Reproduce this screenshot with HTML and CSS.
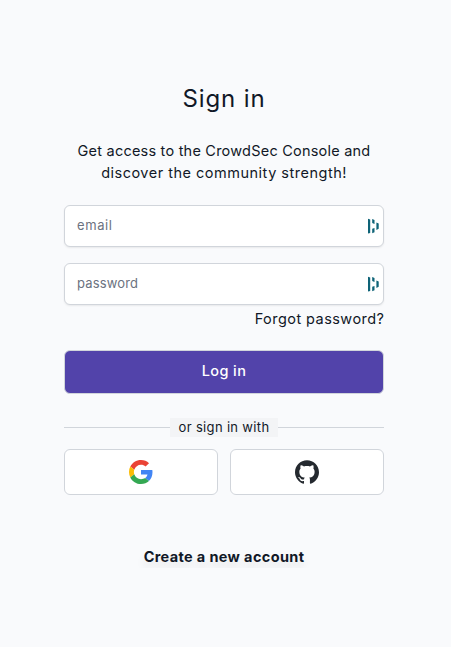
FILE: index.html
```html
<!DOCTYPE html>
<html lang="en">
<head>
<meta charset="utf-8">
<title>Sign in</title>
<link rel="stylesheet" href="styles.css">
</head>
<body>
<svg class="defs" aria-hidden="true"><symbol id="vault" viewBox="0 0 12 16"><path d="M0 .8 2.2 1.4V15L0 15.6ZM4.2 1l2.3 .9V6L4.2 5ZM4.2 10.8l2.3-.9v4.3l-2.3 1.1ZM8.4 4.4l2.3 1.1v5.2l-2.3 1.2Z"/></symbol></svg>
<main class="login">
  <h1 class="title">Sign in</h1>
  <p class="intro"><span class="line-one">Get access to the CrowdSec Console and</span><br><span class="line-two">discover the community strength!</span></p>
  <form class="form">
    <label class="field"><input class="input email" type="email" placeholder="email"><svg class="vault"><use href="#vault"/></svg></label>
    <label class="field"><input class="input" type="password" placeholder="password"><svg class="vault"><use href="#vault"/></svg></label>
    <a class="forgot">Forgot password?</a>
    <button class="submit" type="button">Log in</button>
  </form>
  <div class="divider"><span class="divider-text">or sign in with</span></div>
  <div class="providers">
    <button class="provider" type="button" aria-label="Google"><svg width="24" height="24" viewBox="0 0 48 48"><path fill="#EA4335" d="M24 9.5c3.54 0 6.71 1.22 9.21 3.6l6.85-6.85C35.9 2.38 30.47 0 24 0 14.62 0 6.51 5.38 2.56 13.22l7.98 6.19C12.43 13.72 17.74 9.5 24 9.5z"/><path fill="#4285F4" d="M46.98 24.55c0-1.57-.15-3.09-.38-4.55H24v9.02h12.94c-.58 2.96-2.26 5.48-4.78 7.18l7.73 6c4.51-4.18 7.09-10.36 7.09-17.65z"/><path fill="#FBBC05" d="M10.53 28.59c-.48-1.45-.76-2.99-.76-4.59s.27-3.14.76-4.59l-7.98-6.19C.92 16.46 0 20.12 0 24s.92 7.54 2.56 10.78z"/><path fill="#34A853" d="M24 48c6.48 0 11.93-2.13 15.89-5.81l-7.73-6c-2.15 1.45-4.92 2.3-8.16 2.3-6.26 0-11.57-4.22-13.47-9.91l-7.98 6.19C6.51 42.62 14.62 48 24 48z"/></svg></button>
    <button class="provider" type="button" aria-label="GitHub"><svg width="24" height="24" viewBox="0 0 24 24"><path fill="#24292f" d="M12 .297c-6.63 0-12 5.373-12 12 0 5.303 3.438 9.8 8.205 11.385.6.113.82-.258.82-.577 0-.285-.01-1.04-.015-2.04-3.338.724-4.042-1.61-4.042-1.61C4.422 18.07 3.633 17.7 3.633 17.7c-1.087-.744.084-.729.084-.729 1.205.084 1.838 1.236 1.838 1.236 1.07 1.835 2.809 1.305 3.495.998.108-.776.417-1.305.76-1.605-2.665-.3-5.466-1.332-5.466-5.93 0-1.31.465-2.38 1.235-3.22-.135-.303-.54-1.523.105-3.176 0 0 1.005-.322 3.3 1.23.96-.267 1.98-.399 3-.405 1.02.006 2.04.138 3 .405 2.28-1.552 3.285-1.23 3.285-1.23.645 1.653.24 2.873.12 3.176.765.84 1.23 1.91 1.23 3.22 0 4.61-2.805 5.625-5.475 5.92.42.36.81 1.096.81 2.22 0 1.606-.015 2.896-.015 3.286 0 .315.21.69.825.57C20.565 22.092 24 17.592 24 12.297c0-6.627-5.373-12-12-12"/></svg></button>
  </div>
  <a class="create">Create a new account</a>
</main>
</body>
</html>
```
FILE: styles.css
```css
* { box-sizing: border-box; }
body {
  margin: 0;
  background: #f9fafc;
  color: #111827;
  font-family: Inter, "Liberation Sans", sans-serif;
}
.defs { display: block; width: 0; height: 0; }
.login {
  width: 320px;
  margin: 0 0 0 64px;
  padding-top: 83px;
  display: flex;
  flex-direction: column;
  text-align: center;
}
.title { margin: 0; font-size: 24px; line-height: 32px; font-weight: 400; letter-spacing: 0.9px; }
.intro { margin: 25px 0 21px; font-size: 14.5px; line-height: 22px; white-space: nowrap; }
.line-one { letter-spacing: 0.22px; }
.line-two { letter-spacing: 0.5px; }
.form { display: flex; flex-direction: column; }
.field { display: flex; position: relative; height: 42px; margin-bottom: 16px; }
.input {
  width: 100%;
  padding: 0 12px 2px;
  border: 1px solid #d1d5db;
  border-radius: 6px;
  background: #fff;
  box-shadow: 0 1px 2px rgba(0, 0, 0, 0.07);
  font: 400 13px Inter, sans-serif;
  letter-spacing: 0.15px;
}
.email { letter-spacing: 0.6px; }
.input::placeholder { color: #6b7280; opacity: 1; }
.vault { position: absolute; right: 4px; top: 13px; width: 12px; height: 16px; fill: #0e6377; }
.forgot { align-self: flex-end; margin-top: -13px; font-size: 14.5px; line-height: 22px; letter-spacing: 0.45px; margin-right: -0.45px; white-space: nowrap; }
.submit {
  height: 44px;
  margin-top: 20px;
  padding: 0 0 3px;
  border: 1px solid #d1d5db;
  border-radius: 6px;
  background: #5243aa;
  color: #fff;
  font: 500 14.5px Inter, sans-serif;
  letter-spacing: 0.4px;
}
.divider {
  display: flex;
  align-items: center;
  margin-top: 24px;
  height: 19px;
}
.divider::before, .divider::after { content: ""; flex: 1; height: 1px; background: #d1d5db; }
.divider-text { width: 108px; height: 19px; background: #f3f4f6; font-size: 13px; line-height: 19px; letter-spacing: 0.33px; white-space: nowrap; }
.providers { display: grid; grid-template-columns: 1fr 1fr; gap: 12px; margin-top: 12px; }
.provider {
  display: flex;
  align-items: center;
  justify-content: center;
  height: 46px;
  padding: 0;
  border: 1px solid #d1d5db;
  border-radius: 6px;
  background: #fff;
}
.create {
  align-self: center;
  margin-top: 51px;
  font-size: 14.5px;
  line-height: 22px;
  font-weight: 700;
  letter-spacing: 0.36px;
  white-space: nowrap;
  text-shadow: 0 6px 8px rgba(0, 0, 0, 0.1);
}
```
